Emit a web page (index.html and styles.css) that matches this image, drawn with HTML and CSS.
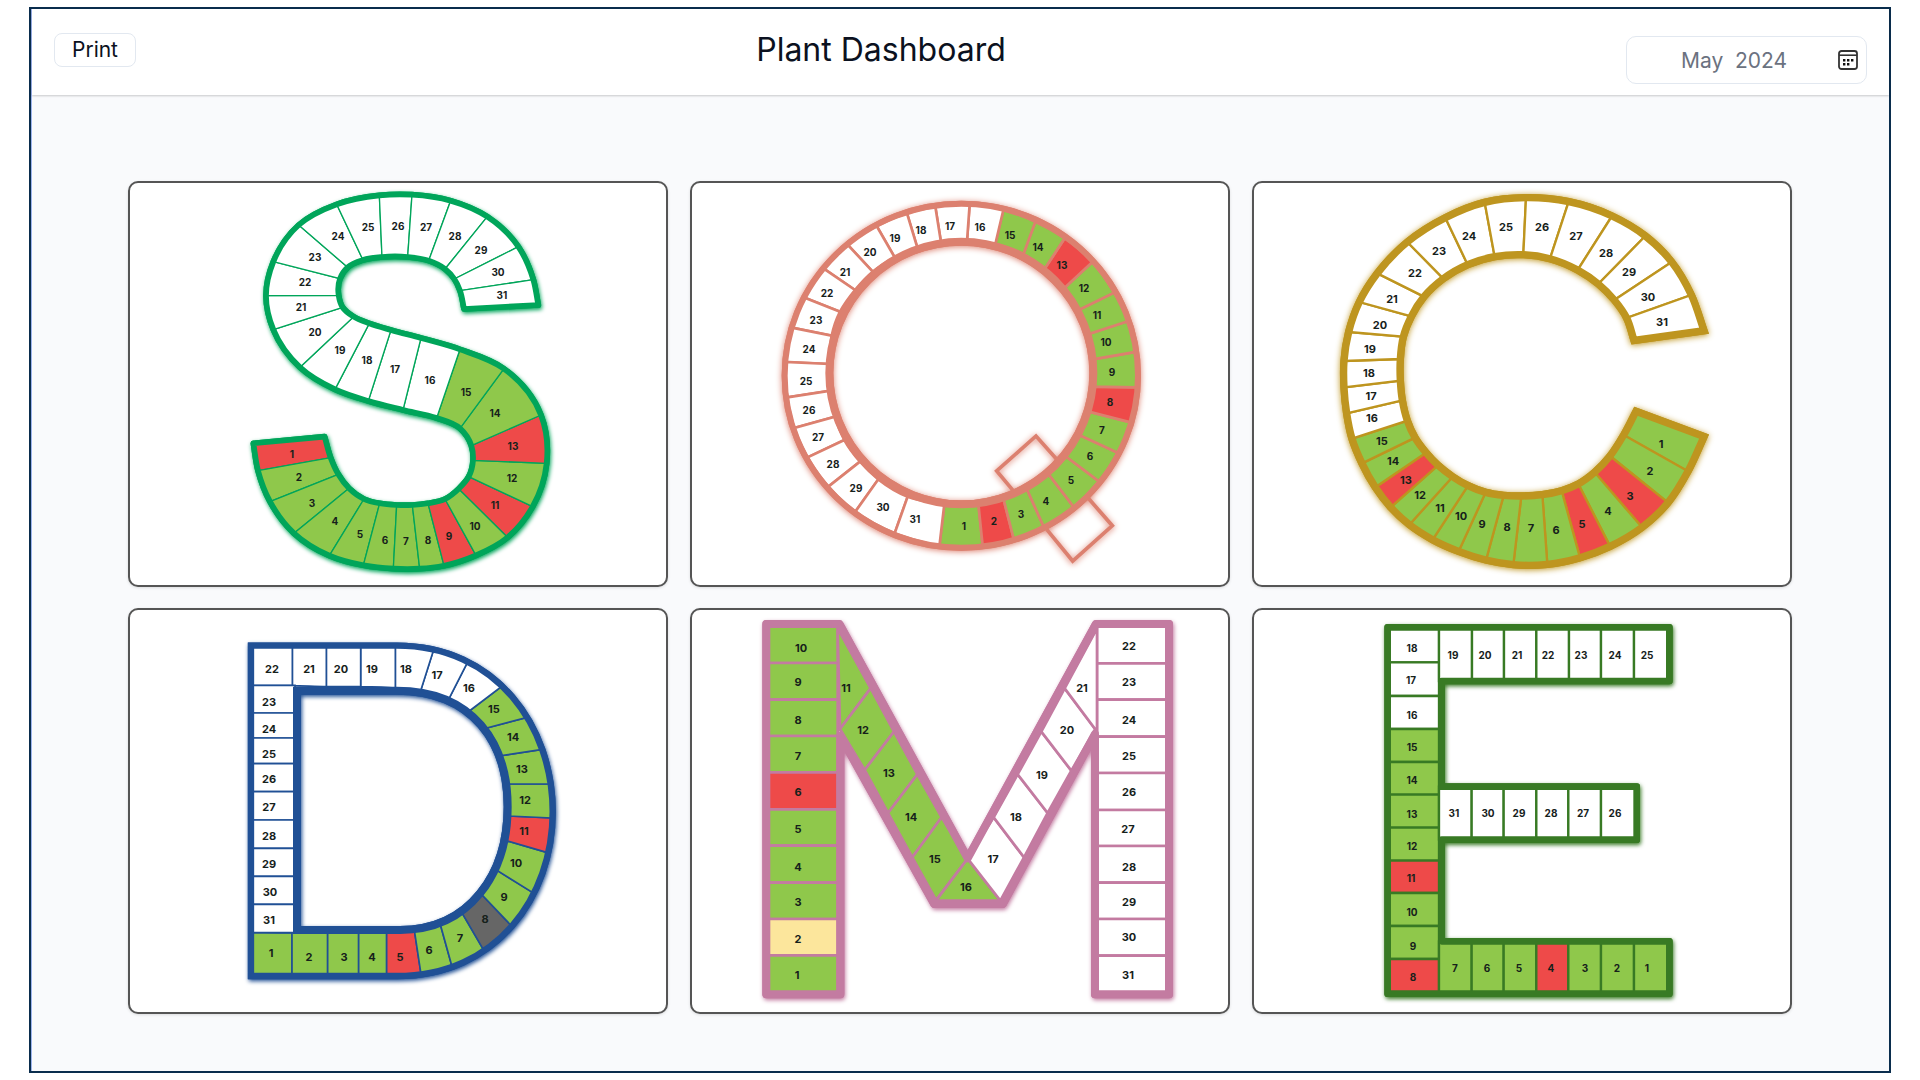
FILE: index.html
```html
<!DOCTYPE html>
<html lang="en">
<head>
    <meta charset="UTF-8">
    <meta name="viewport" content="width=device-width, initial-scale=1.0">
    <title>Plant Dashboard</title>
    <link rel="stylesheet" href="styles.css">
</head>
<body>
    <div class="frame">
        <header class="topbar">
            <button class="print-btn" type="button">Print</button>
            <h1 class="title">Plant Dashboard</h1>
            <label class="month-picker">
                <input class="month-input" type="text" value="May  2024" aria-label="Month">
                <svg class="month-icon" viewBox="0 0 20 20" aria-hidden="true">
                    <rect x="1" y="1" width="18" height="18" rx="2.5" fill="none" stroke="#333" stroke-width="1.8"/>
                    <path d="M1 5.2h18" stroke="#333" stroke-width="1.6"/>
                    <path d="M5 9h2.4v2.4H5zM9 9h2.4v2.4H9zM13 9h2.4v2.4H13zM5 13h2.4v2.4H5zM9 13h2.4v2.4H9z" fill="#111"/>
                </svg>
            </label>
        </header>

        <main class="board">
            <section class="card"><svg class="letter letter-s" data-letter="S" viewBox="-100 3 536 402" role="img" aria-label="S"></svg></section>
            <section class="card"><svg class="letter letter-q" data-letter="Q" viewBox="-68 3 536 402" role="img" aria-label="Q"></svg></section>
            <section class="card"><svg class="letter letter-c" data-letter="C" viewBox="-66 3 536 402" role="img" aria-label="C"></svg></section>
            <section class="card"><svg class="letter letter-d" data-letter="D" viewBox="-100 -10 536 402" role="img" aria-label="D"></svg></section>
            <section class="card"><svg class="letter letter-m" data-letter="M" viewBox="-48 10 536 402" role="img" aria-label="M"></svg></section>
            <section class="card"><svg class="letter letter-e" data-letter="E" viewBox="-106 10 536 402" role="img" aria-label="E"></svg></section>
        </main>
    </div>
    <script src="letters.js"></script>
</body>
</html>
```
FILE: styles.css
```css
* {
    box-sizing: border-box;
}

body {
    margin: 7px 29px;
    background: #fff;
    color: #0b1120;
    font-family: Inter, "Liberation Sans", sans-serif;
}

.frame {
    min-height: calc(100vh - 14px);
    border: 2px solid #0a2d4d;
    background: #f9fafc;
    box-shadow: inset 1px 0 0 #9db4ee;
}

/* header */
.topbar {
    display: flex;
    justify-content: space-between;
    align-items: flex-start;
    height: 86px;
    padding: 24px 22px 0;
    margin-left: 1px;
    background: #fff;
    box-shadow: 0 1px 2px rgba(0, 0, 0, 0.2);
}

.print-btn {
    width: 82px;
    height: 34px;
    padding: 0;
    border: 1px solid #e2e8f0;
    border-radius: 8px;
    background: #fff;
    color: inherit;
    font-family: inherit;
    font-size: 21px;
    line-height: 32px;
    cursor: pointer;
}

.title {
    margin: 0;
    font-size: 32px;
    font-weight: 400;
    line-height: 34px;
}

.month-picker {
    display: flex;
    align-items: center;
    width: 241px;
    height: 48px;
    margin-top: 3px;
    padding: 0 8px 0 54px;
    border: 1px solid #e2e8f0;
    border-radius: 10px;
    background: #fff;
}

.month-input {
    flex: 1;
    min-width: 0;
    padding: 0;
    border: none;
    outline: none;
    background: none;
    color: #6b7280;
    font-family: inherit;
    font-size: 21px;
    white-space: pre;
}

.month-icon {
    flex: none;
    width: 20px;
    height: 20px;
}

/* letter cards */
.board {
    display: grid;
    grid-template-columns: repeat(3, 1fr);
    gap: 21px 22px;
    padding: 86px 97px 57px;
}

.card {
    border: 2px solid #555;
    border-radius: 10px;
    background: #fff;
    box-shadow: 0 1px 3px rgba(0, 0, 0, 0.12);
}

.letter {
    display: block;
    width: 100%;
    height: auto;
}

.letter-s { --line: #00a55a; }
.letter-q { --line: #dc806f; }
.letter-c { --line: #be951f; }
.letter-d { --line: #205095; }
.letter-m { --line: #c37ba1; }
.letter-e { --line: #387a24; }

.base {
    filter: drop-shadow(1px 2px 2px var(--line));
}

.letter-q .base,
.letter-c .base {
    filter: drop-shadow(0 1px 3px var(--line));
}

.outline {
    fill: none;
    stroke: var(--line);
}

.base .outline {
    fill: #fff;
    fill-rule: evenodd;
}

.base .tail,
.base .rim {
    fill: none;
}

.cell {
    fill: #fff;
    stroke: var(--line);
}

.cell.good { fill: #8fc84b; }
.cell.bad { fill: #ee4a49; }
.cell.near { fill: #fce69c; }
.cell.off { fill: #666; }

.day {
    fill: #16211b;
    font-size: 10px;
    font-weight: 700;
    text-anchor: middle;
}

.letter-c .day,
.letter-d .day,
.letter-m .day {
    font-size: 11px;
}
```
FILE: letters.js
```js
// shapes are drawn in thirds of a pixel
const UNIT = 3;

// ribs: [outer x, outer y, inner x, inner y], one before each day and one after the last
// rects: [day, x1, y1, x2, y2]    polys: [day, points]
// rim: inner edge that gets a heavier line
// days: label centres, 1 to 31
const letters = {
    S: {
        stroke: 17, divider: 4, goodUntil: 15,
        marks: { 1: 'bad', 9: 'bad', 11: 'bad', 13: 'bad' },
        ribs: [
            [70,790,284,770], [84,872,302,833], [120,965,325,883], [192,1060,357,925],
            [298,1127,402,957], [400,1156,449,970], [490,1166,500,975], [569,1166,547,975],
            [642,1157,594,970], [738,1126,645,957], [833,1072,686,926], [908,980,716,890],
            [950,850,729,841], [933,705,724,797], [822,566,690,745], [690,508,620,714],
            [573,474,519,690], [483,450,415,663], [418,430,315,628], [371,410,210,562],
            [338,382,130,449], [326,346,108,347], [330,296,130,245], [353,262,206,135],
            [399,240,320,73], [456,231,448,46], [533,231,546,44], [596,242,662,62],
            [645,267,772,110], [673,297,865,200], [690,332,910,299], [702,387,925,375]
        ],
        days: [
            [186,823], [206,891], [245,969], [314,1024], [391,1063], [465,1080], [528,1083], [594,1079],
            [657,1067], [734,1037], [795,976], [845,894], [850,797], [795,700], [707,637], [601,599],
            [496,567], [411,541], [330,511], [254,457], [213,381], [224,307], [254,232], [323,168],
            [413,141], [503,139], [589,142], [676,168], [753,210], [805,275], [815,346]
        ]
    },
    Q: {
        stroke: 18, divider: 8, goodUntil: 15,
        marks: { 2: 'bad', 8: 'bad', 13: 'bad' },
        outline: 'M74 587a530 516 0 1 0 1060 0a530 516 0 1 0 -1060 0zM208 579a396 394 0 1 0 792 0a396 394 0 1 0 -792 0z',
        rim: 'M208 579a396 394 0 1 0 792 0a396 394 0 1 0 -792 0z',
        tail: 'M890 838L828 768L710 873L762 935M985 955L1057 1037L938 1143L860 1048',
        ribs: [
            [538,1100,553,972], [668,1098,655,970], [762,1080,730,955], [852,1042,800,926],
            [942,982,864,880], [1018,905,916,828], [1073,818,958,765], [1112,727,986,695],
            [1132,622,998,620], [1132,515,998,538], [1108,422,986,462], [1062,338,956,390],
            [998,245,910,327], [914,175,853,268], [826,125,790,223], [730,90,706,192],
            [629,72,621,184], [526,80,543,187], [441,100,472,203], [350,138,404,232],
            [262,193,338,275], [190,265,285,330], [134,353,240,395], [95,443,215,467],
            [75,546,208,552], [82,652,212,632], [103,744,225,710], [143,832,253,780],
            [205,920,300,845], [286,995,355,898], [404,1060,443,950], [538,1100,553,972]
        ],
        days: [
            [611,1037], [702,1024], [784,1001], [859,962], [933,901], [989,829], [1026,751], [1051,667],
            [1056,576], [1038,486], [1010,405], [971,323], [907,256], [835,200], [750,164], [659,142],
            [569,139], [483,149], [404,174], [329,216], [254,275], [201,340], [167,421], [148,508],
            [138,602], [148,690], [174,771], [218,852], [288,923], [370,982], [466,1018]
        ]
    },
    C: {
        stroke: 22, divider: 7, goodUntil: 15, join: 'miter',
        marks: { 3: 'bad', 5: 'bad', 13: 'bad' },
        ribs: [
            [1152,770,948,694], [1104,874,911,765], [1044,968,870,828], [966,1042,824,877],
            [870,1099,775,912], [780,1133,725,932], [682,1153,667,944], [580,1154,604,948],
            [498,1140,551,946], [416,1114,497,937], [338,1079,444,917], [268,1034,398,890],
            [212,982,354,856], [166,922,318,818], [126,850,285,773], [96,776,262,722],
            [80,700,247,661], [72,622,241,602], [72,543,241,537], [86,456,250,470],
            [118,366,274,409], [172,280,312,350], [262,186,370,296], [376,113,443,254],
            [494,67,524,230], [618,53,610,224], [746,65,690,236], [876,108,773,270],
            [976,168,835,312], [1055,246,883,360], [1114,345,920,414], [1152,452,942,481]
        ],
        days: [
            [1022,791], [991,873], [930,947], [864,993], [786,1031], [708,1051], [633,1045], [560,1042],
            [487,1031], [422,1009], [360,983], [301,944], [259,899], [220,843], [185,782], [157,714],
            [153,649], [146,578], [150,506], [180,435], [215,357], [284,280], [358,214], [447,169],
            [559,140], [665,140], [768,169], [859,218], [928,275], [984,350], [1027,425]
        ]
    },
    D: {
        stroke: 19, divider: 5, goodUntil: 15, join: 'miter',
        marks: { 5: 'bad', 8: 'off', 11: 'bad' },
        outline: 'M63 77H500C800 77 968 320 968 575C968 830 800 1068 500 1068H63ZM201 212H500C730 212 833 370 833 560C833 760 720 930 510 930H201Z',
        rim: 'M201 212H500C730 212 833 370 833 560C833 760 720 930 510 930H201Z',
        ribs: [
            [62,1068,62,938], [186,1068,186,938], [293,1068,293,932], [386,1068,386,932],
            [470,1068,470,932], [573,1062,553,930], [665,1036,630,910], [762,992,690,868],
            [845,918,748,816], [912,820,793,746], [950,697,825,661], [966,594,835,588],
            [965,492,832,492], [938,388,815,407], [892,292,770,324], [818,197,718,273],
            [712,128,657,236], [610,92,572,212], [496,78,496,204], [392,78,392,200],
            [289,78,289,200], [187,78,187,197], [62,78,62,197]
        ],
        rects: [
            [23,62,196,195,279], [24,62,279,195,354], [25,62,354,195,431], [26,62,431,195,515],
            [27,62,515,195,600], [28,62,600,195,685], [29,62,685,195,769], [30,62,769,195,853],
            [31,62,853,195,938]
        ],
        days: [
            [123,1000], [238,1011], [342,1011], [427,1011], [510,1011], [596,991], [689,955], [765,898],
            [821,832], [858,728], [883,634], [885,540], [877,446], [849,352], [792,268], [717,203],
            [621,164], [529,148], [425,148], [333,148], [237,148], [127,148], [118,247], [118,326],
            [117,401], [118,478], [117,562], [118,647], [118,731], [119,815], [116,900]
        ]
    },
    M: {
        stroke: 24, divider: 8, goodUntil: 16,
        marks: { 2: 'near', 6: 'bad' },
        outline: 'M79 72H298L683 775L1068 72H1287V1183H1065V402L788 912H583L301 408V1183H79Z',
        rects: [
            [10,78,72,293,189], [9,78,189,293,299], [8,78,299,293,408], [7,78,408,293,517],
            [6,78,517,293,628], [5,78,628,293,737], [4,78,737,293,848], [3,78,848,293,957],
            [2,78,957,293,1066], [1,78,1066,293,1183],
            [22,1071,72,1287,190], [23,1071,190,1287,299], [24,1071,299,1287,410], [25,1071,410,1287,519],
            [26,1071,519,1287,630], [27,1071,630,1287,738], [28,1071,738,1287,848], [29,1071,848,1287,957],
            [30,1071,957,1287,1067], [31,1071,1067,1287,1183]
        ],
        polys: [
            [11, '293,85 392,265 300,387'], [12, '392,265 462,395 374,510 300,387'],
            [13, '462,395 532,523 444,639 374,510'], [14, '532,523 605,652 517,772 444,639'],
            [15, '605,652 683,776 588,900 517,772'], [16, '683,776 588,902 781,902'],
            [17, '683,776 761,652 852,772 781,902'], [18, '761,652 833,523 923,639 852,772'],
            [19, '833,523 904,395 994,512 923,639'], [20, '904,395 974,265 1066,387 994,512'],
            [21, '974,265 1071,85 1071,395']
        ],
        days: [
            [172,1124], [174,1017], [174,907], [174,800], [174,686], [174,576], [173,469], [174,361],
            [174,245], [184,144], [319,264], [369,391], [448,518], [514,650], [586,777], [677,862],
            [760,777], [827,650], [906,524], [980,391], [1025,264], [1166,138], [1166,245], [1166,361],
            [1166,469], [1166,576], [1165,686], [1166,800], [1166,907], [1167,1011], [1164,1124]
        ]
    },
    E: {
        stroke: 20, divider: 7, goodUntil: 15,
        marks: { 4: 'bad', 8: 'bad', 11: 'bad' },
        outline: 'M83 82H928V243H245V560H830V719H245V1024H928V1181H83Z',
        rects: [
            [18,83,82,237,187], [17,83,187,237,288], [16,83,288,237,387], [15,83,387,237,486],
            [14,83,486,237,584], [13,83,584,237,683], [12,83,683,237,782], [11,83,782,237,879],
            [10,83,879,237,978], [9,83,978,237,1077], [8,83,1077,237,1181],
            [19,237,82,336,243], [20,336,82,432,243], [21,432,82,529,243], [22,529,82,627,243],
            [23,627,82,723,243], [24,723,82,822,243], [25,822,82,928,243],
            [31,237,560,335,719], [30,335,560,431,719], [29,431,560,529,719], [28,529,560,625,719],
            [27,625,560,723,719], [26,723,560,829,719],
            [7,237,1024,335,1181], [6,335,1024,431,1181], [5,431,1024,529,1181], [4,529,1024,625,1181],
            [3,625,1024,723,1181], [2,723,1024,822,1181], [1,822,1024,928,1181]
        ],
        days: [
            [862,1104], [770,1104], [675,1104], [573,1104], [477,1104], [381,1104], [286,1104], [159,1130],
            [159,1039], [155,935], [152,835], [155,738], [155,643], [155,540], [155,442], [155,345],
            [153,241], [155,144], [278,166], [374,166], [471,166], [565,166], [664,166], [765,166],
            [862,166], [765,640], [669,640], [573,640], [476,640], [383,640], [283,640]
        ]
    }
};

// unit direction of the curve at points[i], near neighbours count for more
function tangent(points, i) {
    const a = points[Math.max(0, i - 1)], b = points[i], c = points[Math.min(points.length - 1, i + 1)];
    const ab = Math.hypot(b[0] - a[0], b[1] - a[1]) || 1e6;
    const bc = Math.hypot(c[0] - b[0], c[1] - b[1]) || 1e6;
    const x = (b[0] - a[0]) / ab * bc / ab + (c[0] - b[0]) / bc;
    const y = (b[1] - a[1]) / ab * bc / ab + (c[1] - b[1]) / bc;
    const length = Math.hypot(x, y) || 1;
    return [x / length, y / length];
}

// smooth curve from points[i] to the next point in the given direction
function curve(points, i, step) {
    const b = points[i], c = points[i + step];
    const reach = step * Math.hypot(c[0] - b[0], c[1] - b[1]) / 3;
    const tb = tangent(points, i), tc = tangent(points, i + step);
    const p1 = [b[0] + tb[0] * reach, b[1] + tb[1] * reach];
    const p2 = [c[0] - tc[0] * reach, c[1] - tc[1] * reach];
    return `C${p1} ${p2} ${c}`;
}

function stripOutline(outer, inner) {
    const last = outer.length - 1;
    let d = `M${outer[0]}`;
    for (let i = 0; i < last; i++) d += curve(outer, i, 1);
    d += `L${inner[last]}`;
    for (let i = last; i > 0; i--) d += curve(inner, i, -1);
    return d + 'Z';
}

function drawLetter(svg) {
    const letter = letters[svg.dataset.letter];
    const ribs = letter.ribs || [];
    const outer = ribs.map(r => [r[0], r[1]]);
    const inner = ribs.map(r => [r[2], r[3]]);
    const shapes = [];

    for (let i = 0; i < ribs.length - 1; i++) {
        shapes.push([i + 1, `M${outer[i]}${curve(outer, i, 1)}L${inner[i + 1]}${curve(inner, i + 1, -1)}Z`]);
    }
    (letter.rects || []).forEach(([day, x1, y1, x2, y2]) => {
        shapes.push([day, `M${x1} ${y1}H${x2}V${y2}H${x1}Z`]);
    });
    (letter.polys || []).forEach(([day, points]) => shapes.push([day, `M${points}Z`]));

    const cells = shapes.map(([day, d]) => {
        const state = letter.marks[day] || (day <= letter.goodUntil ? 'good' : '');
        return `<path class="cell ${state}" stroke-width="${letter.divider}" d="${d}"/>`;
    }).join('');

    const d = letter.outline || stripOutline(outer, inner);
    const rim = letter.rim ? `<path class="outline rim" stroke-width="24" d="${letter.rim}"/>` : '';
    const outline = `<path class="outline" stroke-width="${letter.stroke}" stroke-linejoin="${letter.join || 'round'}" d="${d}"/>${rim}`;
    const tail = letter.tail ? `<path class="outline tail" stroke-width="11" d="${letter.tail}"/>` : '';
    const scale = `transform="scale(${1 / UNIT})"`;

    const labels = letter.days.map(([x, y], i) =>
        `<text class="day" x="${Math.round(x / UNIT)}" y="${Math.round(y / UNIT) + 4}">${i + 1}</text>`
    ).join('');

    svg.innerHTML =
        `<g class="base"><g ${scale}>${tail}${outline}</g></g>` +
        `<g ${scale}>${cells}${outline}</g>${labels}`;
}

document.querySelectorAll('.letter').forEach(drawLetter);
```
